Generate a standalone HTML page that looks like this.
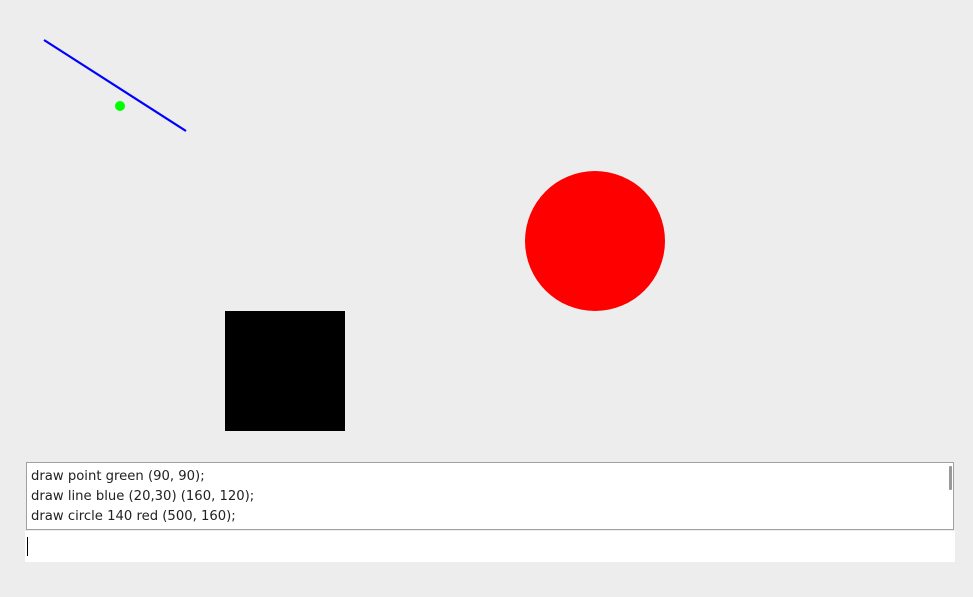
<!DOCTYPE html>
<html><head><meta charset="utf-8"><style>
html,body{margin:0;padding:0;background:#ededed;width:973px;height:597px;overflow:hidden;position:relative}
.ta{position:absolute;left:26px;top:462px;width:926px;height:66px;background:#fff;border:1px solid #a0a0a0;font-family:"DejaVu Sans","Liberation Sans",sans-serif;font-size:13.2px;color:#222;}
.ta .l{position:absolute;left:4px;white-space:pre}
.ta .sb{position:absolute;left:922px;top:3px;width:3px;height:24px;background:#999;border-radius:1px}
.inp{position:absolute;left:25px;top:531px;width:930px;height:31px;background:#fff}
.cur{position:absolute;left:2px;top:6px;width:1px;height:19px;background:#000}
</style></head><body>
<svg width="973" height="460" style="position:absolute;left:0;top:0">
<line x1="44" y1="40" x2="186" y2="131" stroke="#0000ff" stroke-width="2.2"/>
<circle cx="120" cy="106" r="5" fill="#00ff00"/>
<circle cx="595" cy="241" r="70" fill="#ff0000"/>
<rect x="225" y="311" width="120" height="120" fill="#000"/>
</svg>
<div class="ta">
<div class="l" style="top:6px">draw point green (90, 90);</div>
<div class="l" style="top:26px">draw line blue (20,30) (160, 120);</div>
<div class="l" style="top:46px">draw circle 140 red (500, 160);</div>
<div class="sb"></div>
</div>
<div class="inp"><div class="cur"></div></div>
</body></html>
